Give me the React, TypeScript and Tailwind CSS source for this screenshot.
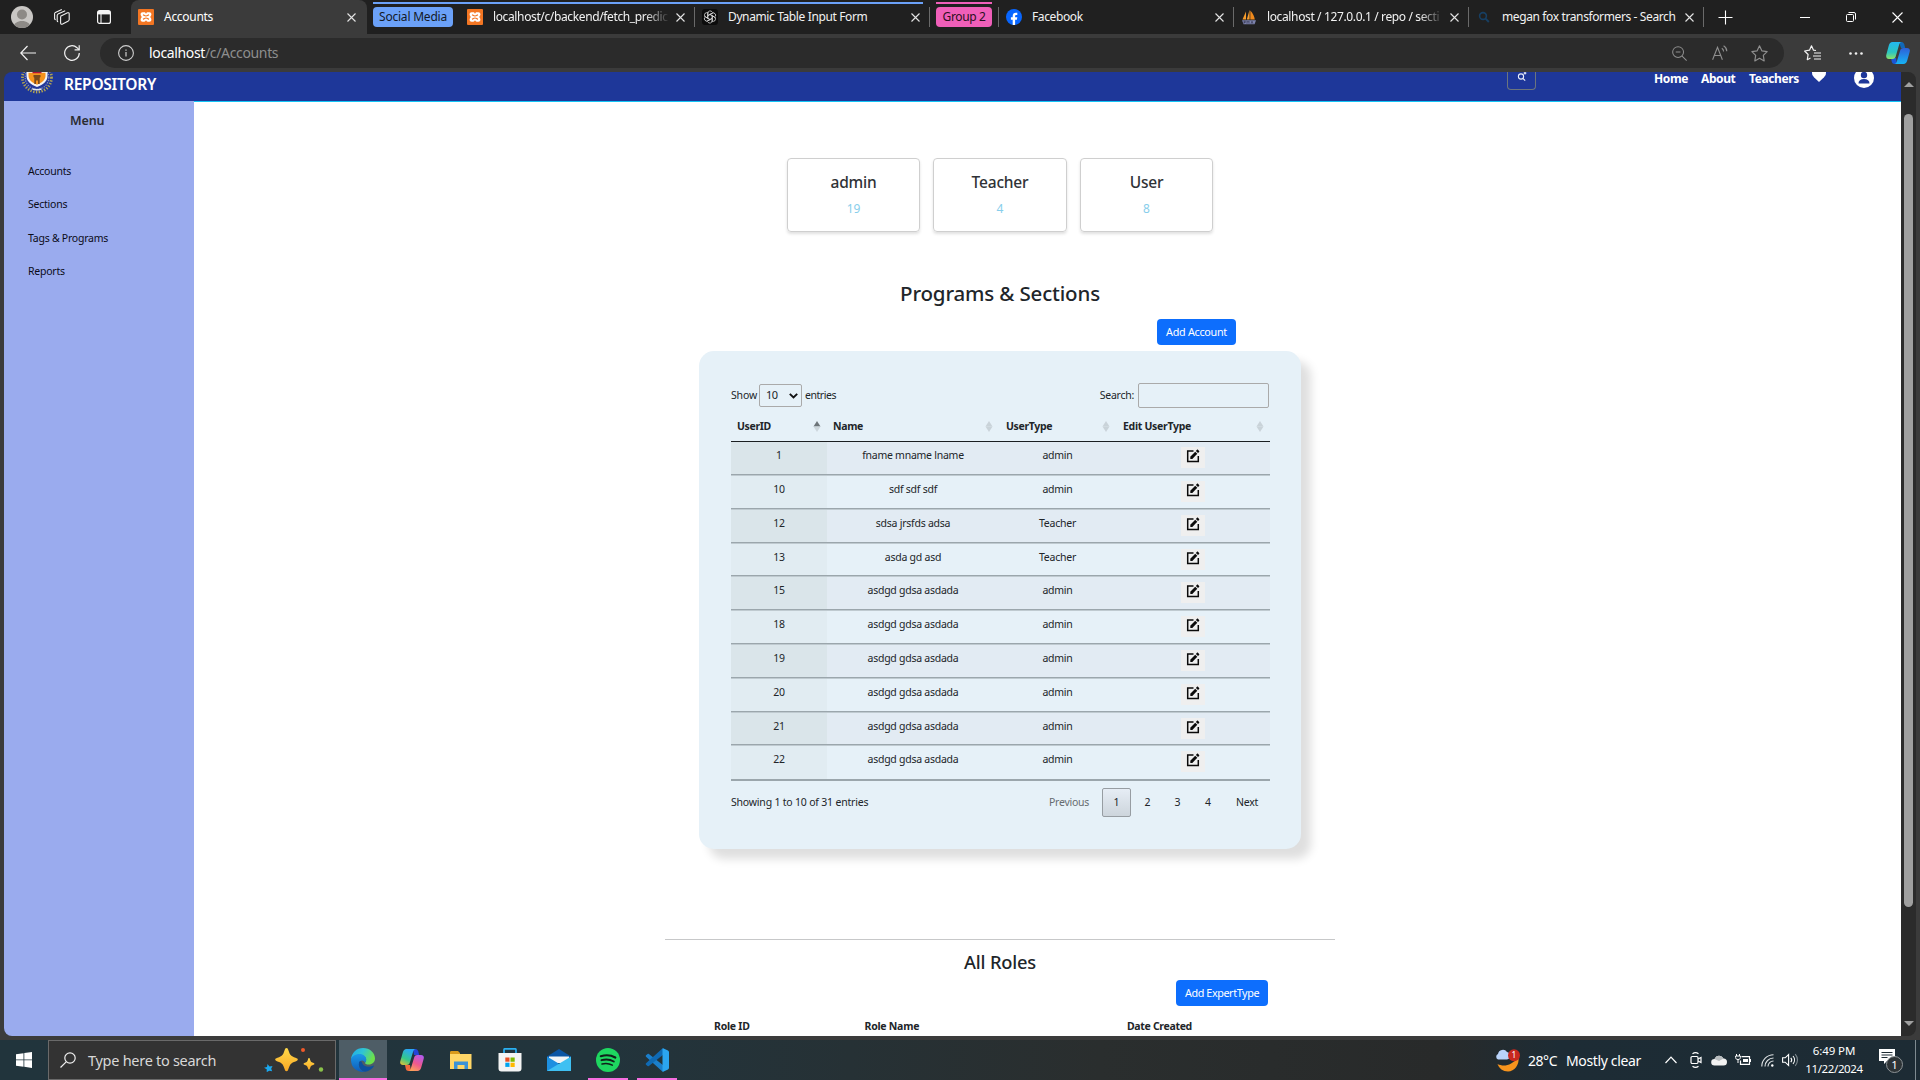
import React from "react";

type IconProps = { className?: string };

const XamppIcon = ({ className = "" }: IconProps) => (
  <svg viewBox="0 0 16 16" className={"h-4 w-4 shrink-0 " + className}>
    <rect width="16" height="16" rx="1" fill="#f37623" />
    <path
      d="M4.600 3.300h1.700c.8 0 1.200.5 1.400 1.100h.6c.2-.6.6-1.100 1.400-1.100h1.700c1.200 0 2 .9 2 2 0 1-.5 1.700-1.200 2.700.7.900 1.200 1.700 1.200 2.700 0 1.100-.8 2-2 2H9.700c-.8 0-1.200-.5-1.400-1.100h-.6c-.2.6-.6 1.100-1.400 1.100H4.600c-1.200 0-2-.9-2-2 0-1 .5-1.800 1.200-2.700-.7-1-1.200-1.700-1.200-2.700 0-1.100.8-2 2-2z"
      fill="#fff"
    />
    <path d="M5 5.700c1.100.4 1.500 1.300 3 1.300s1.900-.9 3-1.300M5 10.300c1.100-.4 1.500-1.300 3-1.300s1.900.9 3 1.300" fill="none" stroke="#f37623" strokeWidth="1.200" />
  </svg>
);

const ChatIcon = () => (
  <svg viewBox="0 0 16 16" className="h-4 w-4 shrink-0">
    <rect width="16" height="16" rx="3" fill="#0c0c0c" />
    <g fill="none" stroke="#d8d8d8" strokeWidth=".8">
      {[0, 60, 120, 180, 240, 300].map((a) => (
        <path key={a} transform={`rotate(${a} 8 8)`} d="M10.200 6.700L8 5.400 5.800 6.700V4.300a2.400 2.400 0 0 1 4.400-1.300M8 5.400l3.300-1.900" />
      ))}
    </g>
  </svg>
);

const FacebookIcon = () => (
  <svg viewBox="0 0 16 16" className="h-4 w-4 shrink-0">
    <circle cx="8" cy="8" r="8" fill="#0866ff" />
    <path d="M6.700 16v-5.300H4.900V8.300h1.800V7.100c0-2.300 1.100-3.400 3.300-3.400.4 0 .9 0 1.300.1v2.100h-.9c-1 0-1.300.4-1.300 1.300v1.100h2.200l-.4 2.400H9.100V16z" fill="#fff" />
  </svg>
);

const PmaIcon = () => (
  <svg viewBox="0 0 16 16" className="h-4 w-4 shrink-0">
    <path d="M1.500 10.500L5 2.500v8zM5.800 10.500L8.600.8v9.700z" fill="#f89c2b" />
    <path d="M9.300 10.500V1.500c2.400 2.500 4 5.500 4.500 9z" fill="#f08a1c" />
    <path d="M1 11.200h14l-1.500 4H2.500z" fill="#7d83ad" />
    <path d="M3 14.700v-2.500h1.300v1.300H3M6 14.800v-2.600l1 1 1-1v2.600M10 14.800l1-2.600 1 2.600" fill="none" stroke="#2b2d44" strokeWidth=".6" />
  </svg>
);

const BingSearchIcon = () => (
  <svg viewBox="0 0 16 16" className="h-4 w-4 shrink-0">
    <circle cx="7" cy="7" r="3.400" fill="none" stroke="#173f63" strokeWidth="1.600" />
    <path d="M9.600 9.600l3.200 3.400" stroke="#173f63" strokeWidth="1.900" />
  </svg>
);

const CloseX = () => (
  <svg viewBox="0 0 9 9" className="h-[9px] w-[9px] shrink-0">
    <path d="M.5.5l8 8M8.500.5l-8 8" stroke="#e4e4e4" strokeWidth="1.100" />
  </svg>
);

function Tab({ icon, title, fade }: { icon: React.ReactNode; title: string; fade?: boolean }) {
  return (
    <div className="flex h-5 w-[235px] shrink-0 items-center border-r border-[#6a6a6a] pl-[7px] pr-[9px]">
      {icon}
      <div
        className={
          fade
            ? "ml-[10px] w-[175px] whitespace-nowrap text-xs tracking-[-0.37px] text-[#f2f2f2] [mask-image:linear-gradient(to_right,black_152px,transparent_177px)]"
            : "ml-[10px] w-[175px] whitespace-nowrap text-xs tracking-[-0.38px] text-[#f2f2f2]"
        }
      >
        {title}
      </div>
      <div className="ml-auto">
        <CloseX />
      </div>
    </div>
  );
}

function TabStrip() {
  return (
    <div className="relative flex h-[34px] shrink-0 items-center bg-[#202020]">
      <div className="flex h-full w-[131px] shrink-0 items-center pl-[11px]">
        <svg viewBox="0 0 22 22" className="h-[22px] w-[22px]">
          <clipPath id="avatarClip"><circle cx="11" cy="11" r="11" /></clipPath>
          <g clipPath="url(#avatarClip)">
            <rect width="22" height="22" fill="#c9c7c4" />
            <circle cx="11" cy="8.500" r="5" fill="#8d8a86" />
            <path d="M2.500 22c0-5 4-7 8.500-7s8.500 2 8.500 7z" fill="#8d8a86" />
          </g>
        </svg>
        <svg viewBox="0 0 16 16" className="ml-[21px] h-4 w-4" fill="none" stroke="#f0f0f0" strokeWidth="1.100">
          <path d="M6.500 7.200l7-3.400c.8-.3 1.700.1 1.700 1v5.800c0 .6-.3 1-.8 1.300l-5.800 3.200c-1 .5-2 0-2-1V8.200c0-.5.200-.8.600-1z" />
          <path d="M4.200 12.800c-.6 0-1-.4-1-1V6.400c0-.6.300-1 .8-1.300l7.200-3.300" />
          <path d="M1.700 10.600c-.7 0-1.100-.4-1.100-1V4.700c0-.6.300-1 .8-1.300L7.800.5" />
        </svg>
        <svg viewBox="0 0 14 14" className="ml-[27px] h-[14px] w-[14px]" fill="none" stroke="#f5f5f5">
          <rect x=".6" y=".6" width="12.800" height="12.800" rx="2" strokeWidth="1.200" />
          <path d="M1 2.700h12" strokeWidth="3.400" />
          <path d="M4 4v9" strokeWidth="1.100" />
        </svg>
      </div>
      <div className="flex h-full w-[236px] shrink-0 items-center rounded-t-lg bg-[#3b3b3b] pl-[7px] pr-[11px]">
        <XamppIcon />
        <div className="ml-[10px] whitespace-nowrap text-xs tracking-[-0.29px] text-white">Accounts</div>
        <div className="ml-auto">
          <CloseX />
        </div>
      </div>
      <div className="relative ml-[6px] flex h-full w-[557px] shrink-0 items-center">
        <div className="absolute left-0 top-[2px] h-[2px] w-[550px] bg-[#6ba1f8]" />
        <div className="flex h-5 w-20 shrink-0 items-center justify-center whitespace-nowrap rounded bg-[#6ba1f8] text-xs tracking-[-0.21px] text-[#141a26]">Social Media</div>
        <div className="ml-[7px] flex">
          <Tab icon={<XamppIcon />} title="localhost/c/backend/fetch_predic" fade />
          <Tab icon={<ChatIcon />} title="Dynamic Table Input Form" />
        </div>
      </div>
      <div className="relative ml-[6px] flex h-full shrink-0 items-center">
        <div className="absolute left-0 top-[2px] h-[2px] w-14 bg-[#f05fb9]" />
        <div className="flex h-5 w-14 shrink-0 items-center justify-center whitespace-nowrap rounded bg-[#f05fb9] text-xs tracking-[-0.36px] text-[#2a0f20]">Group 2</div>
        <div className="ml-[6px] h-5 w-px bg-[#6a6a6a]" />
        <Tab icon={<FacebookIcon />} title="Facebook" />
        <Tab icon={<PmaIcon />} title="localhost / 127.0.0.1 / repo / secti" fade />
        <Tab icon={<BingSearchIcon />} title="megan fox transformers - Search" />
      </div>
      <div className="ml-[14px] flex items-center">
        <svg viewBox="0 0 15 15" className="h-[15px] w-[15px]"><path d="M7.500.5v14M.5 7.500h14" stroke="#fff" strokeWidth="1.100" /></svg>
        <svg viewBox="0 0 10 10" className="ml-[67px] h-[10px] w-[10px]"><path d="M0 5.500h10" stroke="#fff" strokeWidth="1" /></svg>
        <svg viewBox="0 0 10 10" className="ml-[36px] h-[10px] w-[10px]" fill="none" stroke="#fff">
          <rect x=".5" y="2.500" width="7" height="7" rx="1" />
          <path d="M2.500.5H8a1.500 1.500 0 0 1 1.500 1.500v5.500" />
        </svg>
        <svg viewBox="0 0 11 11" className="ml-[36px] h-[11px] w-[11px]"><path d="M.5.5l10 10M10.500.5l-10 10" stroke="#fff" strokeWidth="1.100" /></svg>
      </div>
    </div>
  );
}

const CopilotMark = ({ className = "" }: IconProps) => (
  <svg viewBox="0 0 24 22" className={className}>
    <defs>
      <linearGradient id="cpA" x1="0" y1="0" x2="0" y2="1">
        <stop offset="0" stopColor="#22b8f0" /><stop offset=".6" stopColor="#2cc5c0" /><stop offset="1" stopColor="#8be36a" />
      </linearGradient>
      <linearGradient id="cpB" x1="0" y1="0" x2="0" y2="1">
        <stop offset="0" stopColor="#2e5fd8" /><stop offset="1" stopColor="#16b4f5" />
      </linearGradient>
    </defs>
    <path d="M13 0h2.500c1.500 0 2.300 1 2.700 2.300l1 3.700H15z" fill="#1168b8" />
    <path d="M11 22H8.500c-1.500 0-2.300-1-2.700-2.300L5 16h5z" fill="#1b55d8" />
    <path d="M6.500 0h9c-1.300.3-2 1.300-2.400 2.800L10 13.500c-.5 2-1.300 3.500-3.500 3.500H3c-2.200 0-3.300-1.800-2.700-4.200L2.800 3.500C3.400 1.300 4.500 0 6.500 0z" fill="url(#cpA)" />
    <path d="M17.500 22h-9c1.300-.3 2-1.300 2.400-2.800L14 9c.5-2 1.300-3 3.500-3H21c2.200 0 3.300 1.300 2.700 3.700l-2.500 8.800c-.6 2.200-1.700 3.500-3.700 3.500z" fill="url(#cpB)" />
  </svg>
);

function Toolbar() {
  return (
    <div className="flex h-[38px] shrink-0 items-center bg-[#3b3b3b] pl-5">
      <svg viewBox="0 0 16 16" className="h-4 w-4" fill="none" stroke="#f2f2f2" strokeWidth="1.200"><path d="M16 8H.8M7.500 1L.8 8l6.700 7" /></svg>
      <svg viewBox="0 0 16 16" className="ml-7 h-4 w-4" fill="none" stroke="#f2f2f2" strokeWidth="1.200">
        <path d="M15.300 8A7.300 7.300 0 1 1 13 2.700L15 4.700" /><path d="M15.200.2v4.600h-4.600" />
      </svg>
      <div className="ml-5 flex h-[30px] w-[1684px] items-center rounded-full bg-[#2b2b2b] pl-[18px] pr-4">
        <svg viewBox="0 0 16 16" className="h-4 w-4" fill="none" stroke="#cfcfcf" strokeWidth="1.100">
          <circle cx="8" cy="8" r="7.400" /><path d="M8 7v4.500M8 4.500v1.200" strokeWidth="1.200" />
        </svg>
        <div className="ml-[15px] whitespace-nowrap text-sm tracking-[-0.35px] text-[#8e8e8e]"><span className="text-white">localhost</span>/c/Accounts</div>
        <div className="ml-auto flex items-center text-[#8f8f8f]">
          <svg viewBox="0 0 16 16" className="h-[15px] w-[15px]" fill="none" stroke="currentColor" strokeWidth="1.100"><circle cx="6.500" cy="6.500" r="5.800" /><path d="M10.800 10.800l4.800 4.800M4 6.500h5" /></svg>
          <svg viewBox="0 0 16 16" className="ml-[25px] h-4 w-4" fill="none" stroke="currentColor" strokeWidth="1.100"><path d="M.6 14.800L5.500 2.200l4.900 12.600M2.200 10.500h6.600M9.800 3.300c1.200.7 1.800 1.800 1.800 3.200M11.600.8c2 1.200 3.200 3 3.200 5.400" /></svg>
          <svg viewBox="0 0 16 16" className="ml-[23px] h-[17px] w-[17px]" fill="none" stroke="currentColor" strokeWidth="1.100" strokeLinejoin="round"><path d="M8 .8l2.200 4.700 5 .7-3.600 3.600.8 5.200L8 12.500l-4.400 2.500.8-5.200L.8 6.200l5-.7z" /></svg>
        </div>
      </div>
      <svg viewBox="0 0 17 16" className="ml-5 h-4 w-[17px]" fill="none" stroke="#f2f2f2" strokeWidth="1.200" strokeLinejoin="round">
        <path d="M12 5.500l-2.500-.3L7.500.8l-2 4.400-4.900.8 3.500 3.500-.8 5.200 3.200-1.800M10 8h7M9 11h8M10 14h7" />
      </svg>
      <svg viewBox="0 0 14 3" className="ml-7 h-[3px] w-[14px]" fill="#f2f2f2"><circle cx="1.500" cy="1.500" r="1.300" /><circle cx="7" cy="1.500" r="1.300" /><circle cx="12.500" cy="1.500" r="1.300" /></svg>
      <CopilotMark className="ml-[23px] h-[22px] w-6" />
    </div>
  );
}

const Crest = () => (
  <svg viewBox="0 0 34 22" className="h-[22px] w-[34px]">
    <circle cx="17" cy="5.500" r="14.500" fill="none" stroke="#b3a552" strokeWidth="2.800" strokeDasharray="1.300 1.500" />
    <circle cx="17" cy="5.500" r="11.800" fill="#24389a" stroke="#8794bd" strokeWidth="1.200" strokeDasharray="1.300 1.200" />
    <path d="M6.500 0h21v4c0 5-4 8.500-10.500 11C10.500 12.500 6.500 9 6.500 4z" fill="#f4f4f4" />
    <path d="M8.500.8h17v3c0 4.200-3.300 6.800-8.500 8.900-5.200-2.100-8.500-4.700-8.500-8.900z" fill="#f7941d" />
    <path d="M12.500 0h9v1.200h-9z" fill="#b3123a" />
    <path d="M13.500 3h7v2l-.8.800V12h-1.700V8.500h-2V12h-1.700V5.800l-.8-.8z" fill="#7a4a1c" />
    <path d="M12.500 17c3 1 6 1 9 0" stroke="#dfe5ef" strokeWidth="1.400" fill="none" />
  </svg>
);

function SiteHeader() {
  return (
    <div className="flex h-[29px] shrink-0 items-start bg-[#1e3799]">
      <div className="ml-4"><Crest /></div>
      <div className="ml-[10px] mt-px whitespace-nowrap text-[15.500px] font-semibold leading-[22px] tracking-[-0.25px] text-white">REPOSITORY</div>
      <div className="ml-auto flex h-[18px] w-[29px] justify-center rounded-b border border-t-0 border-[#6c757d]">
        <svg viewBox="0 0 10 10" className="h-[10px] w-[10px]" fill="none" stroke="#e8ecf8" strokeWidth="1.100"><circle cx="4" cy="4.500" r="2.600" /><path d="M6 6.500l2.200 2.200M8 0v2.600M6.700 1.100h2.600" /></svg>
      </div>
      <div className="ml-[118px] flex text-xs font-bold leading-[13px] tracking-[-0.4px] text-white">
        <div className="w-[47px]">Home</div>
        <div className="w-12">About</div>
        <div className="w-[63px]">Teachers</div>
      </div>
      <svg viewBox="0 0 14 10" className="h-[10px] w-[14px]"><path d="M0 0h14c.1 2.500-.8 4-2 5.200L7 10 2 5.200C.8 4-.1 2.500 0 0z" fill="#fff" /></svg>
      <svg viewBox="0 0 20 16" className="ml-7 mr-[27px] h-4 w-5">
        <circle cx="10" cy="6" r="10" fill="#fff" />
        <circle cx="10" cy="3" r="3.200" fill="#1e3799" />
        <path d="M4.500 11.500c0-3 2-4.500 5.500-4.500s5.500 1.500 5.500 4.500z" fill="#1e3799" />
      </svg>
    </div>
  );
}

function Sidebar() {
  return (
    <div className="w-[190px] shrink-0 bg-[#9aabee]">
      <div className="ml-[66px] mt-[10px] h-5 text-[12.500px] font-semibold leading-5 tracking-[-0.1px] text-[#2b2d33]">Menu</div>
      <div className="ml-6 mt-[23px] text-[10.500px] tracking-[-0.24px] text-[#0b0b18]">
        {["Accounts", "Sections", "Tags & Programs", "Reports"].map((t) => (
          <div key={t} className="h-[33.400px] whitespace-nowrap leading-[34px]">{t}</div>
        ))}
      </div>
    </div>
  );
}

const EditIcon = () => (
  <svg viewBox="0 0 14 14" className="h-[14px] w-[14px]">
    <path d="M7.500 1.900H1.700v10.500h10.600V7" fill="none" stroke="#0a0a0a" strokeWidth="1.500" />
    <path d="M4.300 9.900V7.800l4.900-5.100 2.100 2.100-5 5.100z" fill="#0a0a0a" />
    <path d="M9.900 2l1.100-1.200c.3-.3.700-.3 1 0l1.100 1.100c.3.300.3.700 0 1L12 4.100z" fill="#0a0a0a" />
  </svg>
);

const SortMarks = ({ up }: { up?: boolean }) => (
  <svg viewBox="0 0 8 11" className="h-[11px] w-2">
    <path d="M4 0l3.500 5.400h-7z" fill={up ? "#6d7579" : "#c9d3d9"} />
    <path d="M4 11l3.500-5.400h-7z" fill={up ? "#ccd6db" : "#c9d3d9"} />
  </svg>
);

const rows: [number, string, string][] = [
  [1, "fname mname lname", "admin"],
  [10, "sdf sdf sdf", "admin"],
  [12, "sdsa jrsfds adsa", "Teacher"],
  [13, "asda gd asd", "Teacher"],
  [15, "asdgd gdsa asdada", "admin"],
  [18, "asdgd gdsa asdada", "admin"],
  [19, "asdgd gdsa asdada", "admin"],
  [20, "asdgd gdsa asdada", "admin"],
  [21, "asdgd gdsa asdada", "admin"],
  [22, "asdgd gdsa asdada", "admin"],
];

function rowFrame(i: number) {
  if (i === 0) return "h-[33px] border-b border-b-[#9ba6ac] ";
  if (i === rows.length - 1) return "h-[35.600px] border-b-2 border-t border-b-[#9ba6ac] border-t-[#bfcad0] ";
  return "h-[33.800px] border-b border-t border-b-[#9ba6ac] border-t-[#bfcad0] ";
}

function AccountsCard() {
  return (
    <div className="mt-[6px] h-[498px] w-[602px] rounded-[15px] bg-[#e6f1f8] pl-8 pr-[31px] pt-8 text-[10.500px] tracking-[-0.250px] text-[#212529] shadow-[10px_10px_10px_rgba(0,0,0,0.130)]">
      <div className="flex h-[25px] items-center">
        <div className="w-7 tracking-[-0.15px]">Show</div>
        <div className="flex h-[23px] w-[43px] items-center rounded-[2px] border border-[#aaaaaa] pl-[6px] pr-[3px]">
          <span className="text-[11px] tracking-[-0.5px]">10</span>
          <svg viewBox="0 0 9 6" className="ml-auto h-[6px] w-[9px]"><path d="M.8.8l3.700 3.700L8.200.8" fill="none" stroke="#111" strokeWidth="1.900" /></svg>
        </div>
        <div className="ml-[3px] tracking-[-0.45px]">entries</div>
        <div className="ml-auto">Search:</div>
        <div className="ml-[4px] mr-px h-[25px] w-[131px] rounded-[2px] border border-[#aaaaaa]" />
      </div>
      <div className="mt-[3px] flex h-[31px] items-center border-b border-[#1b1f22] pt-px font-bold tracking-[-0.350px]">
        <div className="flex w-24 items-center pl-[6px] pr-[6px]">UserID<span className="ml-auto"><SortMarks up /></span></div>
        <div className="flex w-[173px] items-center pl-[6px] pr-[7px]">Name<span className="ml-auto"><SortMarks /></span></div>
        <div className="flex w-[116px] items-center pl-[6px] pr-[6px]">UserType<span className="ml-auto"><SortMarks /></span></div>
        <div className="flex w-[154px] items-center pl-[7px] pr-[6px] tracking-[-0.3px]">Edit UserType<span className="ml-auto"><SortMarks /></span></div>
      </div>
      {rows.map(([id, name, type], i) => (
        <div
          key={id}
          className={
            "flex text-center leading-[27px] " + rowFrame(i) +
            (i % 2 === 0 ? "bg-[#e2ebf3]" : "bg-[#e6f1f8]")
          }
        >
          <div className={i % 2 === 0 ? "w-24 bg-[#dae5ea]" : "w-24 bg-[#e1ecf2]"}>{id}</div>
          <div className="w-[172px]">{name}</div>
          <div className="w-[117px]">{type}</div>
          <div className="flex w-[154px] justify-center">
            <div className="mt-[5px] flex h-[21px] w-6 justify-center bg-[#efefef] pt-[2px]"><EditIcon /></div>
          </div>
        </div>
      ))}
      <div className="mt-[7px] flex h-[29px] items-center">
        <div className="whitespace-nowrap tracking-[-0.20px]">Showing 1 to 10 of 31 entries</div>
        <div className="ml-auto w-[53px] text-[#666c70]">Previous</div>
        <div className="flex h-[29px] w-[29px] items-center justify-center rounded-[2px] border border-[#979da2] bg-gradient-to-b from-[#e6edf5] to-[#cdd5dc]">1</div>
        <div className="w-[33px] text-center">2</div>
        <div className="w-[27px] text-center">3</div>
        <div className="w-[34px] text-center">4</div>
        <div className="ml-[11px] mr-[13px] w-[21px]">Next</div>
      </div>
    </div>
  );
}

function Main() {
  return (
    <div className="flex-1 border-t border-[#12c4f5] bg-white">
      <div className="flex w-[1612px] flex-col items-center pt-14">
        <div className="flex gap-[13px]">
          {[["admin", "19"], ["Teacher", "4"], ["User", "8"]].map(([t, n]) => (
            <div key={t} className="h-[74px] w-[133.500px] rounded-[4px] border border-[#cfcfcf] pt-[12px] text-center shadow-[0_2px_3px_rgba(0,0,0,0.12)]">
              <div className="h-6 text-[15.500px] font-medium leading-[22px] tracking-[-0.2px] text-[#2f3236]">{t}</div>
              <div className="mt-[4px] text-[12px] leading-[20px] text-[#87ceeb]">{n}</div>
            </div>
          ))}
        </div>
        <div className="mt-[47px] h-[29px] whitespace-nowrap text-[20.500px] font-medium leading-[29px] tracking-[-0.16px] text-[#212529]">Programs & Sections</div>
        <div className="mt-[11px] flex w-[472px] justify-end">
          <div className="flex h-[26px] w-[79px] items-center justify-center whitespace-nowrap rounded bg-[#0d6efd] text-[10.800px] tracking-[-0.280px] text-white">Add Account</div>
        </div>
        <AccountsCard />
        <div className="mt-[90px] h-px w-[670px] bg-[#c7c8c9]" />
        <div className="mt-[10px] h-[25px] whitespace-nowrap text-[18.300px] font-medium leading-6 tracking-[-0.2px] text-[#212529]">All Roles</div>
        <div className="mt-[5px] flex w-[536px] justify-end">
          <div className="flex h-[26px] w-[92px] items-center justify-center whitespace-nowrap rounded bg-[#0d6efd] text-[10.800px] tracking-[-0.4px] text-white">Add ExpertType</div>
        </div>
        <div className="mt-[10px] flex w-[572px] text-[10.500px] font-bold leading-5 tracking-[-0.250px] text-[#212529]">
          <div className="w-[150.500px]">Role ID</div>
          <div className="w-[262.500px]">Role Name</div>
          <div className="tracking-[-0.32px]">Date Created</div>
        </div>
      </div>
    </div>
  );
}

function Scrollbar() {
  return (
    <div className="flex w-[15px] shrink-0 flex-col items-center bg-[#2b2b2b]">
      <svg viewBox="0 0 10 5" className="mt-[10px] h-[5px] w-[10px]"><path d="M5 0l5 5H0z" fill="#a0a0a0" /></svg>
      <div className="mt-[27px] h-[793px] w-[9px] rounded-full bg-[#9f9f9f]" />
      <svg viewBox="0 0 10 5" className="mt-[114px] h-[5px] w-[10px]"><path d="M5 5l5-5H0z" fill="#a0a0a0" /></svg>
    </div>
  );
}

const Sparkles = () => (
  <svg viewBox="0 0 62 24" className="h-6 w-[62px]">
    <defs>
      <linearGradient id="gold" x1="0" y1="0" x2="0" y2="1"><stop offset="0" stopColor="#ffd94a" /><stop offset="1" stopColor="#f9a825" /></linearGradient>
    </defs>
    <path d="M23.500 0c1 0 1.500.8 2 2.500 1.500 4.700 2.500 5.700 7 7.200 1.600.5 2.300 1 2.300 1.900s-.7 1.400-2.300 1.900c-4.500 1.500-5.500 2.700-7 7.200-.5 1.700-1 2.500-2 2.500s-1.500-.8-2-2.500c-1.500-4.500-2.500-5.700-7-7.200-1.600-.5-2.300-1-2.300-1.900s.7-1.400 2.300-1.900c4.500-1.500 5.500-2.500 7-7.200.5-1.700 1-2.500 2-2.500z" fill="url(#gold)" />
    <path d="M46 10c.6 0 .8.600 1 1.400.7 2.200 1 2.700 3 3.300.9.300 1.400.5 1.400 1.100s-.5.800-1.400 1.100c-2 .6-2.300 1.100-3 3.300-.2.800-.4 1.300-1 1.300s-.8-.5-1-1.300c-.7-2.200-1-2.700-3-3.300-.900-.3-1.400-.5-1.400-1.100s.5-.8 1.400-1.100c2-.6 2.300-1.100 3-3.300.2-.8.4-1.400 1-1.400z" fill="url(#gold)" />
    <path d="M4.500 16l2 2.400 3-.4-1.300 2.700 1 2.500-3-.5-2.500 1.500v-3L1 19.800l3-.9z" fill="#1ba8ee" />
    <circle cx="40" cy="2" r="2" fill="#f1592a" />
    <circle cx="58" cy="21.500" r="2.200" fill="#8bc34a" />
  </svg>
);

const EdgeIcon = () => (
  <svg viewBox="0 0 24 24" className="h-6 w-6">
    <defs>
      <linearGradient id="edT" x1="0" y1="0" x2="1" y2=".4"><stop offset="0" stopColor="#1fa8ea" /><stop offset=".5" stopColor="#2fc4d4" /><stop offset="1" stopColor="#6ce04a" /></linearGradient>
      <linearGradient id="edB" x1="0" y1="0" x2="0" y2="1"><stop offset="0" stopColor="#1b98e8" /><stop offset="1" stopColor="#0f5cb8" /></linearGradient>
    </defs>
    <path d="M0 11.500C.5 4.800 5.500 0 12 0c7 0 12 5 12 10.500 0 3.600-2.700 6-6.200 6-2.500 0-3.800-.8-3.800-1.600 0-.5 1.200-1.200 1.200-3.200 0-2.700-2.700-4.800-6-4.800C4.500 6.900.8 9.200 0 11.500z" fill="url(#edT)" />
    <path d="M0 12C.3 8.500 4 6 8.500 6c4 0 6.700 2.600 6.700 5.400 0 1.800-.8 2.800-1.200 3.400-1.200-3.300-5.300-3.200-6 .7-.8 4.500 3.200 8.300 6.500 8.200C7 25 0 20 0 12z" fill="url(#edB)" />
    <path d="M8 14.500c-1 5 3 9.400 6.500 9.200 3.600-.4 6.600-2.600 8.300-5.400.3-.5-.2-.9-.7-.6-4 2-10 1-11-3-.5-1.500-2.500-2-3.100-.2z" fill="#0d4f9e" />
  </svg>
);

const CopilotColor = () => (
  <svg viewBox="0 0 24 22" className="h-[22px] w-6">
    <defs>
      <linearGradient id="ccA" x1=".5" y1="0" x2="0" y2="1"><stop offset="0" stopColor="#2aa6f5" /><stop offset=".55" stopColor="#34c98a" /><stop offset="1" stopColor="#f4c22e" /></linearGradient>
      <linearGradient id="ccB" x1=".8" y1="0" x2=".3" y2="1"><stop offset="0" stopColor="#b25af0" /><stop offset=".55" stopColor="#f0588e" /><stop offset="1" stopColor="#fba05a" /></linearGradient>
    </defs>
    <path d="M13 0h2.500c1.500 0 2.300 1 2.700 2.300l1 3.700H14z" fill="#2444d8" />
    <path d="M11 22H8.500c-1.500 0-2.300-1-2.700-2.300L5 16h5z" fill="#f26a3c" />
    <path d="M6.500 0h9c-1.300.3-2 1.300-2.400 2.800L10 13c-.5 2-1.300 3-3.500 3H3c-2.200 0-3.300-1.300-2.700-3.700L2.800 3.500C3.400 1.300 4.500 0 6.500 0z" fill="url(#ccA)" />
    <path d="M17.500 22h-9c1.300-.3 2-1.300 2.400-2.800L14 9c.5-2 1.300-3 3.500-3H21c2.200 0 3.300 1.300 2.700 3.700l-2.500 8.800c-.6 2.200-1.700 3.500-3.700 3.500z" fill="url(#ccB)" />
  </svg>
);

const FolderIcon = () => (
  <svg viewBox="0 0 22 19" className="h-[19px] w-[22px]">
    <path d="M0 1.500C0 .7.500 0 1.300 0H8l2 2v3H0z" fill="#d99a1c" />
    <path d="M0 3h21.500v15H0z" fill="#ffd667" />
    <path d="M4 10.500h14v7.500h-3.500v-4H7.500v4H4z" fill="#3b92d6" />
  </svg>
);

const StoreIcon = () => (
  <svg viewBox="0 0 24 24" className="h-6 w-6">
    <path d="M6 6V1.800C6 1.200 6.400.8 7 .8h10c.6 0 1 .4 1 1V6" fill="none" stroke="#2ab0f2" strokeWidth="1.700" />
    <path d="M.5 5h23v15.500a3 3 0 0 1-3 3h-17a3 3 0 0 1-3-3z" fill="#f4f4f4" />
    <path d="M7.300 9.500h4.200v4.200H7.300z" fill="#e84f24" />
    <path d="M12.500 9.500h4.200v4.200h-4.200z" fill="#7fba00" />
    <path d="M7.300 14.700h4.200v4.200H7.300z" fill="#00a4ef" />
    <path d="M12.500 14.700h4.200v4.200h-4.200z" fill="#ffb900" />
  </svg>
);

const MailIcon = () => (
  <svg viewBox="0 0 24 22" className="h-[22px] w-6">
    <path d="M0 7.500L12 0l12 7.500V10H0z" fill="#0b55a4" />
    <path d="M2 7.500h20V14H2z" fill="#f2f4f6" />
    <path d="M0 7.500L24 22H0z" fill="#1d8fe0" />
    <path d="M24 7.500L0 22h24z" fill="#3fc0f2" />
  </svg>
);

const SpotifyIcon = () => (
  <svg viewBox="0 0 24 24" className="h-6 w-6">
    <circle cx="12" cy="12" r="12" fill="#1ed760" />
    <g fill="none" stroke="#10201a" strokeLinecap="round">
      <path d="M4.800 8.200c5-1.500 10.500-1 14.500 1.300" strokeWidth="2.200" />
      <path d="M5.500 12.200c4.300-1.200 8.800-.7 12.300 1.300" strokeWidth="1.900" />
      <path d="M6 16c3.600-.9 7.200-.6 10.300 1.200" strokeWidth="1.500" />
    </g>
  </svg>
);

const CodeIcon = () => (
  <svg viewBox="0 0 24 24" className="h-6 w-6">
    <path d="M1 7.300l1.600-1.400c.4-.3.900-.3 1.300 0L18.500 17.500V23.500c-.6.1-1.200-.1-1.700-.6L1 8.700c-.4-.4-.4-1 0-1.400z" fill="#1b7fcb" />
    <path d="M1 16.700l1.600 1.400c.4.300.9.300 1.300 0L18.500 6.500V.5c-.6-.1-1.200.1-1.700.6L1 15.300c-.4.4-.4 1 0 1.400z" fill="#0f6ab4" />
    <path d="M18 .3l5 2.300c.6.300 1 .9 1 1.500v15.800c0 .6-.4 1.200-1 1.500l-5 2.300c-.5.200-.5-.5-.5-1V1.300c0-.500 0-1.200.5-1z" fill="#2ba5f0" />
  </svg>
);

function TaskApp({ children, state }: { children: React.ReactNode; state?: "active" | "open" }) {
  return (
    <div className={"relative flex h-10 w-12 shrink-0 items-center justify-center " + (state === "active" ? "bg-[#4e5d66]" : "")}>
      {children}
      {state && <div className={"absolute bottom-0 h-[2px] bg-[#f66ee0] " + (state === "active" ? "w-12" : "w-10")} />}
    </div>
  );
}

function Taskbar() {
  return (
    <div className="flex h-10 shrink-0 items-center bg-[linear-gradient(to_right,#21343c_0px,#22343c_600px,#2a2e2e_1100px,#282a2a_1440px,#1d2c35_1560px,#1d2b34_1920px)] text-white">
      <svg viewBox="0 0 16 16" className="ml-4 h-4 w-4" fill="#fff"><path d="M0 2.200L7.500 1.200v6.300H0zM8.300 1.100L16 0v7.500H8.300zM0 8.300h7.500v6.400L0 13.800zM8.300 8.300H16V16l-7.700-1.200z" /></svg>
      <div className="ml-4 flex h-10 w-[288px] items-center border border-[#6a6a6a] bg-[#333333] pl-[11px] pr-[10px]">
        <svg viewBox="0 0 16 16" className="h-4 w-4" fill="none" stroke="#f0f0f0" strokeWidth="1.200"><circle cx="10" cy="6" r="5.200" /><path d="M6.200 9.800L.5 15.500" /></svg>
        <div className="ml-3 whitespace-nowrap pt-px text-[14.500px] tracking-[-0.280px] text-[#d8d8d8]">Type here to search</div>
        <div className="ml-auto"><Sparkles /></div>
      </div>
      <div className="ml-[3px] flex gap-px">
        <TaskApp state="active"><EdgeIcon /></TaskApp>
        <TaskApp><CopilotColor /></TaskApp>
        <TaskApp><FolderIcon /></TaskApp>
        <TaskApp><StoreIcon /></TaskApp>
        <TaskApp><MailIcon /></TaskApp>
        <TaskApp state="open"><SpotifyIcon /></TaskApp>
        <TaskApp state="open"><CodeIcon /></TaskApp>
      </div>
      <div className="ml-auto flex h-10 items-center">
        <svg viewBox="0 0 25 23" className="h-[23px] w-[25px]">
          <path d="M23.500 8c1 8-4 14.500-10.500 14.500-5 0-9-3-10.500-7.500 6 3 14 2 21-7z" fill="#f7941d" />
          <path d="M3 10.500a3 3 0 0 1 0-5.500A5 5 0 0 1 12 3c2 .3 3 1.800 3 3.500s-1 4-3 4z" fill="#b9d3fa" />
          <circle cx="19" cy="6.200" r="6" fill="#c8281e" />
          <text x="19" y="9.300" textAnchor="middle" fontSize="8.500" fill="#fff" fontFamily="Noto Sans">1</text>
        </svg>
        <div className="ml-2 w-[38px] whitespace-nowrap text-[14px] tracking-[-0.450px]">28°C</div>
        <div className="w-[99px] whitespace-nowrap text-[14px] tracking-[-0.350px]">Mostly clear</div>
        <svg viewBox="0 0 12 8" className="h-2 w-3" fill="none" stroke="#fff" strokeWidth="1.200"><path d="M.5 7L6 1.200 11.500 7" /></svg>
        <svg viewBox="0 0 12 16" className="ml-[13px] h-4 w-3" fill="none" stroke="#fff" strokeWidth="1.200"><rect x="1" y="4.500" width="7" height="7" rx="1.200" /><path d="M8 7l3-1.500v5L8 9M2.500 1.800c1.700-1.300 4.300-1.300 6 0M2.500 14.200c1.700 1.300 4.300 1.300 6 0" /></svg>
        <svg viewBox="0 0 16 11" className="ml-[9px] h-[11px] w-4"><path d="M3.500 10.500a3.300 3.300 0 0 1 0-6.600A5 5 0 0 1 12.500 3.500a3.500 3.500 0 0 1 0 7z" fill="#f2f2f2" /><path d="M3.500 3.900A5 5 0 0 1 12.500 3.500L8 6z" fill="#b8bcbe" /></svg>
        <svg viewBox="0 0 16 12" className="ml-2 h-3 w-4" fill="none" stroke="#fff" strokeWidth="1.200"><path d="M6.500 2.600h8v7.800h-9V6.500M15.600 5v3" /><path d="M1.500 0v2M4.500 0v2M.6 2h4.800v1.500c0 1.200-.8 2-2.400 2S.6 4.700.6 3.500zM3 5.500V9" strokeWidth="1" /><path d="M8 5h5v3H8z" fill="#fff" stroke="none" /></svg>
        <svg viewBox="0 0 13 13" className="ml-[10px] h-[13px] w-[13px]" fill="none" stroke="#e0e4e6" strokeWidth="1.100"><path d="M.8 12.500A11.700 11.700 0 0 1 12.500.8M4 12.500A8.500 8.500 0 0 1 12.500 4M7 12.500A5.500 5.500 0 0 1 12.500 7" /><circle cx="11.300" cy="11.500" r="1.200" fill="#fff" stroke="none" /></svg>
        <svg viewBox="0 0 16 14" className="ml-2 h-[14px] w-4" fill="none" stroke="#fff" strokeWidth="1.100"><path d="M.6 4.800h2.600L6.600 1.500v11L3.200 9.200H.6zM8.800 4.800c1 1.200 1 3.200 0 4.400M11 3c2 2.300 2 5.700 0 8" /><path d="M13.200 1.200c3 3.400 3 8.200 0 11.600" stroke="#7f8a90" /></svg>
        <div className="ml-[6px] flex w-[60px] flex-col items-center whitespace-nowrap text-[11.500px] leading-[18px] tracking-[-0.1px]">
          <div>6:49 PM</div>
          <div className="tracking-[-0.380px]">11/22/2024</div>
        </div>
        <svg viewBox="0 0 26 26" className="ml-[15px] h-[26px] w-[26px]">
          <path d="M0 2h16v12H8l-3 3v-3H0z" fill="#fff" />
          <path d="M2.500 5.500h11M2.500 8h11M2.500 10.500h6" stroke="#1d2b34" strokeWidth="1.100" />
          <circle cx="15.500" cy="17.500" r="8" fill="#2d3336" stroke="#8d9396" strokeWidth="1" />
          <text x="15.500" y="21.600" textAnchor="middle" fontSize="11.500" fill="#fff" fontFamily="Noto Sans">1</text>
        </svg>
        <div className="ml-[10px] mr-1 h-10 w-px bg-[#7f8a90]" />
      </div>
    </div>
  );
}

export default function App() {
  return (
    <div className="flex h-[1080px] w-[1920px] flex-col overflow-hidden bg-[#3b3b3b] font-['Noto_Sans','Open_Sans',sans-serif]">
      <TabStrip />
      <Toolbar />
      <div className="mx-1 mb-1 flex min-h-0 flex-1 overflow-hidden rounded-lg">
        <div className="flex min-w-0 flex-1 flex-col">
          <SiteHeader />
          <div className="flex min-h-0 flex-1 overflow-hidden">
            <Sidebar />
            <Main />
          </div>
        </div>
        <Scrollbar />
      </div>
      <Taskbar />
    </div>
  );
}
